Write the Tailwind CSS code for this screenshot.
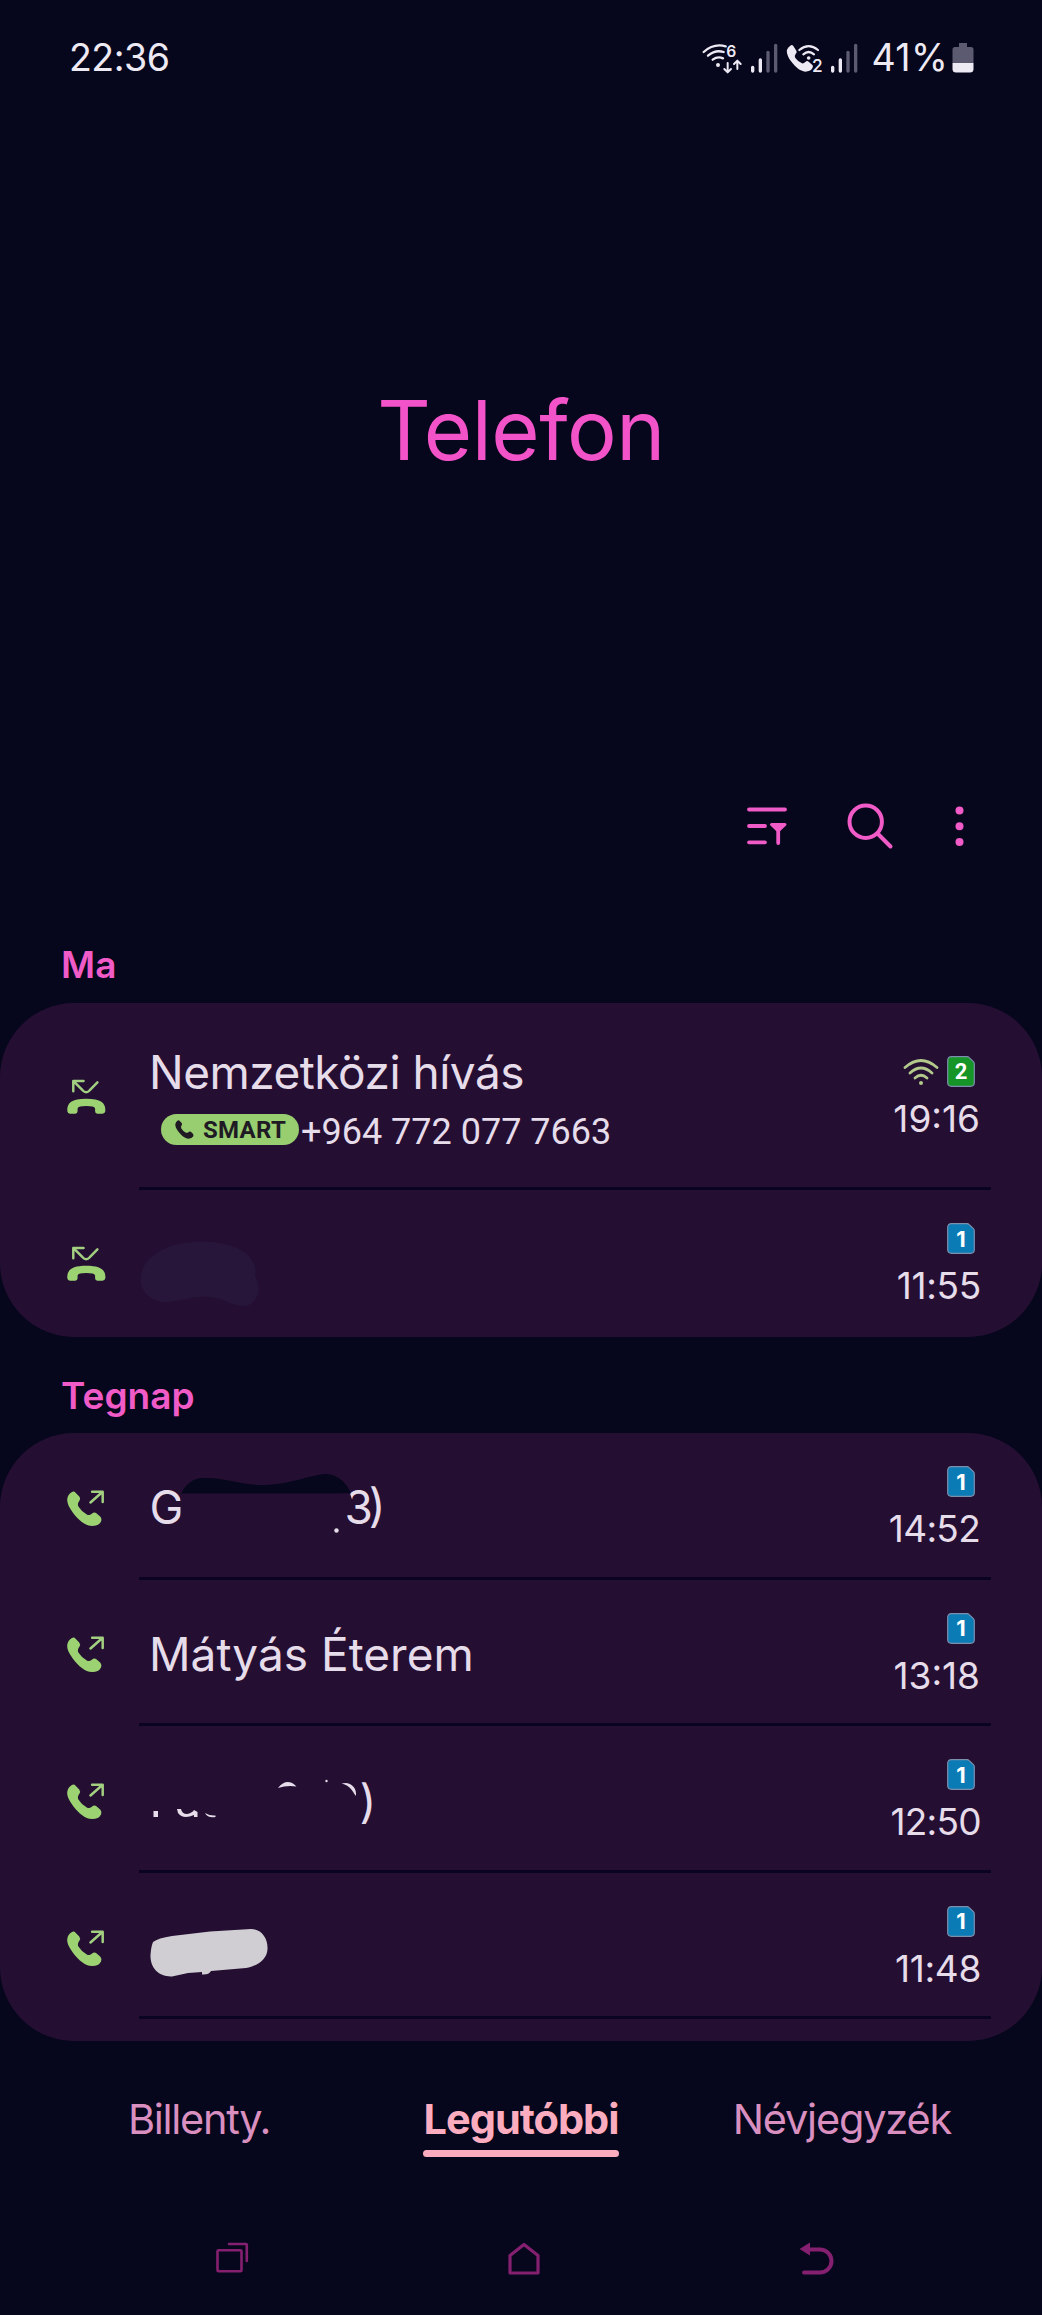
<!DOCTYPE html>
<html lang="hu">
<head>
<meta charset="utf-8">
<title>Telefon</title>
<script src="https://cdn.jsdelivr.net/npm/@tailwindcss/browser@4"></script>
</head>
<body class="bg-[#06061c]">
<svg class="hidden">
  <symbol id="missed" viewBox="195 165 130 115">
    <path d="M293 178 L270 202 Q259 214 248 202 L222 176 M220 205 V174 H251" fill="none" stroke="#a3cf80" stroke-width="7.500" stroke-linecap="round" stroke-linejoin="round"/>
    <path d="M202 266 C200 240 216 228 259 228 C303 228 319 240 317 266 Q316 273 308 273 H293 Q286 273 286 266 V257 Q284 250 259 250 Q235 250 233 257 V266 Q233 273 226 273 H210 Q203 273 202 266Z" fill="#9dd273"/>
  </symbol>
  <symbol id="outgoing" viewBox="195 895 130 118">
    <path d="M216 904 Q222 901 227 906 L238 918 Q243 924 238 931 Q231 940 236 949 Q245 964 262 973 Q269 976 276 970 Q283 963 290 968 L302 979 Q307 985 304 993 Q297 1007 277 1007 C255 1006 236 988 220 968 C206 950 200 935 202 924 Q204 910 216 904Z" fill="#9dd273"/>
    <path d="M272 936 L308 904 M277 903 H309 V934" fill="none" stroke="#a3cf80" stroke-width="7.500" stroke-linecap="round" stroke-linejoin="round"/>
  </symbol>
  <symbol id="sim" viewBox="0 0 28 31">
    <path d="M4.500 .7 H20 Q21.300 .7 22.200 1.600 L26.400 5.600 Q27.300 6.500 27.300 8 V26.500 Q27.300 30.300 23.500 30.300 H4.500 Q.7 30.300 .7 26.500 V4.500 Q.7 .7 4.500 .7Z" fill="currentColor" stroke="#7d8fae" stroke-width="1.200"/>
  </symbol>
</svg>

<div class="w-[1042px] h-[2315px] flex flex-col overflow-hidden font-[Inter,sans-serif] text-[#e6dcea]">

  <!-- status bar -->
  <div class="h-[116px] flex items-center pl-[69px] text-[37.5px] text-[#eeeaf4] shrink-0">
    <span class="tracking-[-0.5px]">22:36</span>
    <svg class="ml-auto w-[160px] h-[40px]" viewBox="60 55 480 120" fill="none" stroke-linecap="round">
      <g stroke="#eeeaf4" stroke-width="7">
        <path d="M71 97 Q101 70 137 80"/>
        <path d="M84 108 Q106 89 131 97"/>
        <path d="M98 120 Q113 109 129 116"/>
        <path d="M143 130 V156 M133 148 L143 158 L153 148 M172 148 V124 M162 133 L172 123 L182 133" stroke-width="6" stroke-linejoin="round"/>
        <path d="M358 91 Q386 68 414 91 M370 104 Q386 90 402 104" stroke-width="6.500"/>
      </g>
      <circle cx="114" cy="136" r="6" fill="#eeeaf4"/>
      <circle cx="386" cy="115" r="5.500" fill="#eeeaf4"/>
      <text x="139" y="111" font-size="47" font-weight="600" fill="#eeeaf4">6</text>
      <path d="M331 78 Q336 74 340 79 L349 93 Q352 98 347 103 Q342 109 346 115 Q354 126 366 131 Q371 132 376 127 Q381 122 386 126 L398 137 Q400 141 397 146 Q391 156 376 156 C360 154 346 142 335 127 C323 112 319 98 321 90 Q324 82 331 78Z" fill="#eeeaf4"/>
      <text x="396" y="157" font-size="52" font-weight="500" fill="#eeeaf4" stroke="#06061c" stroke-width="6" paint-order="stroke">2</text>
      <g stroke-width="10">
        <path d="M218 143 V154 M241 121 V154 M458 143 V154 M481 121 V154" stroke="#eeeaf4"/>
        <path d="M264 98 V154 M287 77 V154 M504 98 V154 M527 77 V154" stroke="#5c5a70"/>
      </g>
    </svg>
    <span class="ml-[12px] tracking-[0.3px]">41%</span>
    <svg class="ml-[4px] mr-[68px] w-[22px] h-[31px] mb-[2px]" viewBox="0 0 22 31">
      <path d="M7 1 H15 V5 H19 Q21.500 5 21.500 7.500 V21 H.5 V7.500 Q.5 5 3 5 H7Z" fill="#5c5a70"/>
      <path d="M.5 21 H21.500 V27 Q21.500 30.500 18 30.500 H4 Q.5 30.500 .5 27Z" fill="#eeeaf4"/>
    </svg>
  </div>

  <!-- title -->
  <div class="h-[628px] flex items-center justify-center shrink-0">
    <h1 class="text-[83px] leading-none tracking-[-0.5px] text-[#f253c8]">Telefon</h1>
  </div>

  <!-- toolbar -->
  <div class="h-[164px] flex items-center justify-end pr-[76px] text-[#f05bc8] shrink-0">
    <svg class="w-[40px] h-[40px]" viewBox="0 0 40 40" fill="none" stroke="currentColor" stroke-width="3.800" stroke-linecap="round">
      <path d="M2 3.500 H38 M2 20 H18 M2 36.300 H18"/>
      <path d="M24.500 18.500 H38 L31.200 25Z" fill="currentColor" stroke-width="3" stroke-linejoin="round"/>
      <path d="M31.200 24 V37"/>
    </svg>
    <svg class="ml-[59px] w-[48px] h-[48px]" viewBox="0 0 48 48" fill="none" stroke="currentColor" stroke-width="4" stroke-linecap="round">
      <circle cx="19.700" cy="19.700" r="16.200"/><path d="M31.500 31.500 L44.500 44.500"/>
    </svg>
    <svg class="ml-[60px] w-[12px] h-[40px]" viewBox="0 0 12 40" fill="currentColor">
      <circle cx="5.500" cy="4.500" r="4"/><circle cx="5.500" cy="20.200" r="4"/><circle cx="5.500" cy="36" r="4"/>
    </svg>
  </div>

  <h2 class="h-[95px] pt-[18px] pl-[61px] flex items-center text-[37px] leading-none font-semibold text-[#f05bc8] shrink-0">Ma</h2>

  <section class="h-[334px] rounded-[74px] bg-[#240f33] overflow-hidden shrink-0">
    <div class="h-[187px] flex">
      <div class="w-[139px] pl-[65px] flex items-center"><svg class="w-[43px] h-[38px]"><use href="#missed"/></svg></div>
      <div class="flex-1 mr-[51px] pr-[10px] border-b-[3px] border-[#0b0322] flex justify-between">
        <div class="pt-[41px] pl-[10px]">
          <div class="text-[46px] leading-[56px] tracking-[-0.5px] whitespace-nowrap">Nemzetközi hívás</div>
          <div class="mt-[14px] ml-[12px] flex items-center font-[Roboto,sans-serif]">
            <span class="w-[138px] h-[31px] rounded-full bg-[#98ce70] text-[#201a24] flex items-center pl-[14px]">
              <svg class="w-[19px] h-[19px] mr-[9px]" viewBox="200 901 108 108" fill="currentColor"><path d="M216 904 Q222 901 227 906 L238 918 Q243 924 238 931 Q231 940 236 949 Q245 964 262 973 Q269 976 276 970 Q283 963 290 968 L302 979 Q307 985 304 993 Q297 1007 277 1007 C255 1006 236 988 220 968 C206 950 200 935 202 924 Q204 910 216 904Z"/></svg>
              <span class="text-[24px] leading-none font-bold tracking-[0.3px]">SMART</span>
            </span>
            <span class="ml-[2px] pt-[3px] -mb-[3px] text-[36px] leading-[31px] whitespace-nowrap">+964 772 077 7663</span>
          </div>
        </div>
        <div class="pt-[53px] flex flex-col items-end">
          <div class="flex items-center mr-[6px]">
            <svg class="w-[36px] h-[28px] mr-[8px]" viewBox="0 0 36 28" fill="none" stroke="#b3c98c" stroke-width="2.700" stroke-linecap="round"><path d="M2 9.500 Q18 -4.500 34 9.500 M7 15 Q18 5 29 15 M12 20 Q18 14.500 24 20"/><circle cx="18" cy="25" r="2" fill="#b3c98c" stroke="none"/></svg>
            <div class="grid place-items-center"><svg class="w-[28px] h-[31px] col-start-1 row-start-1 text-[#159427]"><use href="#sim"/></svg><span class="col-start-1 row-start-1 text-[22px] leading-none font-bold text-white font-[Roboto,sans-serif]">2</span></div>
          </div>
          <div class="mt-[10px] mr-[1px] text-[37px] leading-[44px]">19:16</div>
        </div>
      </div>
    </div>
    <div class="h-[147px] flex">
      <div class="w-[139px] pl-[65px] flex items-center"><svg class="w-[43px] h-[38px]"><use href="#missed"/></svg></div>
      <div class="flex-1 mr-[51px] pr-[10px] flex justify-between">
        <svg class="w-[300px] h-[147px]" viewBox="138 1190 300 147"><path d="M140 1277 C141 1262 152 1255 163 1249 C178 1241 210 1239 230 1246 C245 1250 257 1262 254 1276 C260 1286 258 1300 248 1305 C238 1309 228 1301 215 1298 C198 1294 183 1300 168 1302 C152 1303 138 1293 140 1277Z" fill="#27163a"/></svg>
        <div class="pt-[33px] flex flex-col items-end">
          <div class="grid place-items-center mr-[6px]"><svg class="w-[28px] h-[31px] col-start-1 row-start-1 text-[#0a7bb5]"><use href="#sim"/></svg><span class="col-start-1 row-start-1 text-[22px] leading-none font-bold text-white">1</span></div>
          <div class="mt-[10px] text-[37px] leading-[44px] tracking-[-0.3px]">11:55</div>
        </div>
      </div>
    </div>
  </section>

  <h2 class="h-[96px] pt-[20px] pl-[61px] flex items-center text-[37px] leading-none font-semibold text-[#f05bc8] shrink-0">Tegnap</h2>

  <section class="h-[608px] rounded-[74px] bg-[#240f33] overflow-hidden shrink-0">
    <div class="h-[146.6px] flex">
      <div class="w-[139px] pl-[65px] pt-[4px] flex items-center"><svg class="w-[43px] h-[39px]"><use href="#outgoing"/></svg></div>
      <div class="flex-1 mr-[51px] pr-[10px] border-b-[3px] border-[#0b0322] flex justify-between">
        <svg class="w-[300px] h-[143px]" viewBox="139 1433 300 143">
          <text x="149.500" y="1524" font-size="46" fill="#e6dcea">G</text>
          <path d="M180.500 1484 H200 V1530 H180.500Z" fill="#240f33"/>
          <text x="344.500" y="1524" font-size="46" fill="#e6dcea" textLength="41">3)</text>
          <path d="M181 1493.500 Q189 1478 203 1478 C225 1477 240 1485 262 1485 C290 1485 308 1475 326 1474 Q343 1475 351 1493.500Z" fill="#06061c"/>
          <path d="M340 1493.500 H350 L354 1505 L345 1514 H340Z" fill="#240f33"/>
          <circle cx="336.500" cy="1530.500" r="2.200" fill="#e6dcea"/>
        </svg>
        <div class="pt-[33px] flex flex-col items-end">
          <div class="grid place-items-center mr-[6px]"><svg class="w-[28px] h-[31px] col-start-1 row-start-1 text-[#0a7bb5]"><use href="#sim"/></svg><span class="col-start-1 row-start-1 text-[22px] leading-none font-bold text-white">1</span></div>
          <div class="mt-[10px] mr-[1px] text-[37px] leading-[44px] tracking-[-0.7px]">14:52</div>
        </div>
      </div>
    </div>
    <div class="h-[146.6px] flex">
      <div class="w-[139px] pl-[65px] pt-[4px] flex items-center"><svg class="w-[43px] h-[39px]"><use href="#outgoing"/></svg></div>
      <div class="flex-1 mr-[51px] pr-[10px] border-b-[3px] border-[#0b0322] flex justify-between">
        <div class="pl-[10px] pt-[46px] text-[46px] leading-[56px] whitespace-nowrap">Mátyás Éterem</div>
        <div class="pt-[33px] flex flex-col items-end">
          <div class="grid place-items-center mr-[6px]"><svg class="w-[28px] h-[31px] col-start-1 row-start-1 text-[#0a7bb5]"><use href="#sim"/></svg><span class="col-start-1 row-start-1 text-[22px] leading-none font-bold text-white">1</span></div>
          <div class="mt-[10px] mr-[1px] text-[37px] leading-[44px]">13:18</div>
        </div>
      </div>
    </div>
    <div class="h-[146.6px] flex">
      <div class="w-[139px] pl-[65px] pt-[4px] flex items-center"><svg class="w-[43px] h-[39px]"><use href="#outgoing"/></svg></div>
      <div class="flex-1 mr-[51px] pr-[10px] border-b-[3px] border-[#0b0322] flex justify-between">
        <svg class="w-[300px] h-[143px]" viewBox="139 1726 300 143" fill="#e6dcea">
          <path d="M153.500 1811 H158 V1817 H153.500Z"/>
          <path d="M177 1809 H181 Q182 1814 187 1814 Q192 1813 194 1810 L197.500 1812 V1817 H194 V1815 Q183 1820 178 1813Z"/>
          <path d="M205 1813 Q210 1816 215.500 1815.500 V1817 Q208 1818.500 205 1813Z"/>
          <path d="M278 1788 Q287 1777 296.500 1786.500 Q287 1785 278 1788Z"/>
          <circle cx="326.500" cy="1781" r="1.200"/>
          <path d="M341.500 1783.500 C350 1781 357 1787 356 1796 C352 1791 351 1786 341.500 1783.500Z"/>
          <text x="359.500" y="1818" font-size="46">)</text>
        </svg>
        <div class="pt-[33px] flex flex-col items-end">
          <div class="grid place-items-center mr-[6px]"><svg class="w-[28px] h-[31px] col-start-1 row-start-1 text-[#0a7bb5]"><use href="#sim"/></svg><span class="col-start-1 row-start-1 text-[22px] leading-none font-bold text-white">1</span></div>
          <div class="mt-[10px] text-[37px] leading-[44px] tracking-[-0.7px]">12:50</div>
        </div>
      </div>
    </div>
    <div class="h-[146.6px] flex">
      <div class="w-[139px] pl-[65px] pt-[4px] flex items-center"><svg class="w-[43px] h-[39px]"><use href="#outgoing"/></svg></div>
      <div class="flex-1 mr-[51px] pr-[10px] border-b-[3px] border-[#0b0322] flex justify-between">
        <svg class="w-[300px] h-[143px]" viewBox="139 1873 300 143"><path d="M153 1942 Q158 1938 172 1936 L210 1931.500 L251 1929 C262 1929 268 1939 267.500 1949 C267 1960 257 1966 246 1968 L211 1971 Q209 1975 202 1974.500 V1972 L188 1973 L172 1976.500 C158 1977 150 1967 150.500 1955 Q151 1947 153 1942Z" fill="#d0ced2"/></svg>
        <div class="pt-[33px] flex flex-col items-end">
          <div class="grid place-items-center mr-[6px]"><svg class="w-[28px] h-[31px] col-start-1 row-start-1 text-[#0a7bb5]"><use href="#sim"/></svg><span class="col-start-1 row-start-1 text-[22px] leading-none font-bold text-white">1</span></div>
          <div class="mt-[10px] text-[37px] leading-[44px] tracking-[-0.3px]">11:48</div>
        </div>
      </div>
    </div>
  </section>

  <!-- tabs -->
  <div class="h-[159px] pt-[50px] pl-[128px] pr-[91px] flex items-start text-[41.5px] leading-[56px] text-[#d98fbf] shrink-0">
    <div class="w-[295px]"><span class="tracking-[-1.3px]">Billenty.</span></div>
    <div class="w-[196px] flex flex-col items-center font-bold text-[#fbadbf]">
      <span class="tracking-[-1px] whitespace-nowrap">Legutóbbi</span>
      <span class="mt-[3px] w-[196px] h-[7px] rounded-full bg-[#fbadbf]"></span>
    </div>
    <div class="ml-auto"><span class="tracking-[-1.2px]">Névjegyzék</span></div>
  </div>

  <!-- navigation bar -->
  <div class="h-[115px] flex items-start pt-[41px] pl-[215px] pr-[207px] justify-between text-[#84206f] shrink-0">
    <svg class="w-[34px] h-[34px]" viewBox="0 0 34 34" fill="none" stroke="currentColor" stroke-width="2.600" stroke-linejoin="round" stroke-linecap="round"><rect x="2.500" y="9.300" width="24" height="21" rx="1"/><path d="M14 3 H31 Q31.800 3 31.800 4 V20"/></svg>
    <svg class="w-[34px] h-[36px] mr-[1px]" viewBox="0 0 34 36" fill="none" stroke="currentColor" stroke-width="3.200" stroke-linejoin="round"><path d="M17 3.500 L31 14.500 V32 H3 V14.500Z"/></svg>
    <svg class="w-[36px] h-[36px]" viewBox="0 0 36 36" fill="none" stroke="currentColor" stroke-width="4" stroke-linecap="round"><path d="M5 31.500 H21 A11.500 11.500 0 0 0 21 8.500 H10"/><path d="M.5 8 L11 1.500 V14.500Z" fill="currentColor" stroke="none"/></svg>
  </div>
</div>
</body>
</html>
